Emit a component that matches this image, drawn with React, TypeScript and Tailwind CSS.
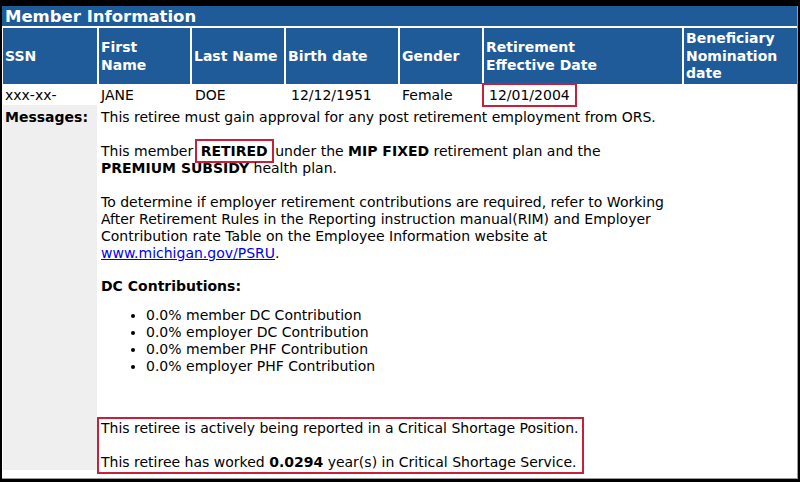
import * as React from "react"

const cols = "grid grid-cols-[94px_91px_92px_112px_82px_198px_1fr] gap-x-[2px]"

const headers = [
  ["SSN"],
  ["First", "Name"],
  ["Last Name"],
  ["Birth date"],
  ["Gender"],
  ["Retirement", "Effective Date"],
  ["Beneficiary", "Nomination", "date"],
]

const contributions = [
  "0.0% member DC Contribution",
  "0.0% employer DC Contribution",
  "0.0% member PHF Contribution",
  "0.0% employer PHF Contribution",
]

export default function App() {
  return (
    <div
      className="w-[800px] h-[482px] bg-black pt-[6px] pl-[2px] pr-[2px] pb-[3px] text-black"
      style={{ fontFamily: '"DejaVu Sans", Verdana, sans-serif' }}
    >
      <div className="h-full bg-white border-r border-b border-[#9a9a9a] flex flex-col">
        {/* Title bar */}
        <div className="h-[20px] bg-[#1f5b99] text-white font-bold text-[16.5px] leading-[21px] px-[3px]">
          Member Information
        </div>

        {/* Column headers */}
        <div className={`${cols} mt-[2px] pl-[1px] h-[56px]`}>
          {headers.map((lines, i) => (
            <div
              key={i}
              className="bg-[#1f5b99] text-white font-bold text-[14px] leading-[17.5px] px-[2px] pt-[1px] flex flex-col justify-center"
            >
              {lines.map((l) => (
                <span key={l}>{l}</span>
              ))}
            </div>
          ))}
        </div>

        {/* Data row */}
        <div className={`${cols} pl-[1px] h-[21px] text-[14px] leading-[22px]`}>
          <div className="pl-[2px]">xxx-xx-</div>
          <div className="pl-[2px]">JANE</div>
          <div className="pl-[3px]">DOE</div>
          <div className="pl-[5px]">12/12/1951</div>
          <div className="pl-[2px]">Female</div>
          <div className="pl-[3px]">
            <span className="border-2 border-[#c8203a] px-[5px] py-[2px] -ml-[5px]">12/01/2004</span>
          </div>
          <div />
        </div>

        {/* Messages row */}
        <div className="flex flex-1 pl-[1px] gap-x-[2px] text-[14px] leading-[17px]">
          <div className="w-[94px] bg-[#efefef] mb-[8px] pl-[2px] pt-[4px] font-bold">Messages:</div>
          <div className="flex-1 pl-[2px] pt-[4px] flex flex-col">
            <p>This retiree must gain approval for any post retirement employment from ORS.</p>
            <p className="mt-[17px]">
              This member{" "}
              <span className="border-2 border-[#c8203a] -mx-[3px] px-[4px] py-[2px] font-bold">RETIRED</span>
              {" "}under the <b>MIP FIXED</b> retirement plan and the
              <br />
              <b>PREMIUM SUBSIDY</b> health plan.
            </p>
            <p className="mt-[17px]">
              To determine if employer retirement contributions are required, refer to Working
              <br />
              After Retirement Rules in the Reporting instruction manual(RIM) and Employer
              <br />
              Contribution rate Table on the Employee Information website at
              <br />
              <a className="text-[#0000ee] underline">www.michigan.gov/PSRU</a>.
            </p>
            <p className="mt-[16px] font-bold">DC Contributions:</p>
            <ul className="list-disc pl-[45px] mt-[12px]">
              {contributions.map((c) => (
                <li key={c}>{c}</li>
              ))}
            </ul>
            <div className="mt-auto mb-[4px] -ml-[4px] w-[487px] h-[57px] border-2 border-[#c8203a] pl-[2px] pt-[1px]">
              <p>This retiree is actively being reported in a Critical Shortage Position.</p>
              <p className="mt-[17px]">
                This retiree has worked <b>0.0294</b> year(s) in Critical Shortage Service.
              </p>
            </div>
          </div>
        </div>
      </div>
    </div>
  )
}
